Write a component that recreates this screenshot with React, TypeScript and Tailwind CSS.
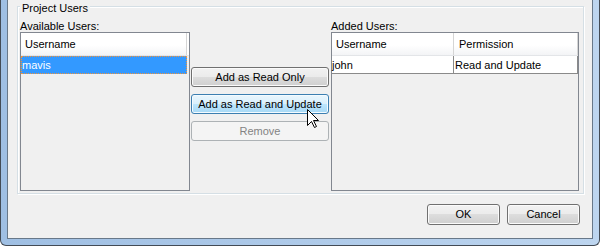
const btn =
  'h-[20px] rounded-[3px] border border-[#707070] bg-[linear-gradient(#f2f2f2,#ebebeb_50%,#dddddd_50%,#cfcfcf)] shadow-[inset_0_0_0_1px_#fbfbfb] text-center leading-[18px]'
const btnHot =
  'h-[20px] rounded-[3px] border border-[#3c7fb1] bg-[linear-gradient(#eaf6fd,#d9f0fc_50%,#bee6fd_50%,#a7d9f5)] shadow-[inset_0_0_0_1px_#f4fbff] text-center leading-[18px]'
const btnOff =
  'h-[20px] rounded-[3px] border border-[#adb2b5] bg-[#f4f4f4] text-[#838383] text-center leading-[18px]'

const header = 'h-[23px] flex bg-[linear-gradient(#ffffff,#ffffff_55%,#f3f4f6)] border-b border-[#e3e5e8]'

function Cursor() {
  return (
    <svg className="absolute left-[307px] top-[109px]" width="13" height="20" viewBox="0 0 13 20">
      <path d="M0.5 0.5 L0.5 16.5 L4.5 12.5 L7.5 18.5 L9.5 17.5 L6.5 11.5 L11.5 11.5 Z" fill="#fff" stroke="#000" strokeWidth="1" />
    </svg>
  )
}

export default function App() {
  return (
    <div className="relative w-[600px] h-[246px] bg-white overflow-hidden font-['Liberation_Sans',Arial,sans-serif] text-[11px] text-black">
      {/* window frame */}
      <div className="h-full flex flex-col border-x border-b border-[#434b55] rounded-b-[6px] bg-[linear-gradient(90deg,#9fbfe3,#bdd5ef)] px-[6px] pb-[6px]">
        <div className="flex-1 flex flex-col border-x border-b border-[#687889] bg-[#f0f0f0]">
          {/* Project Users group */}
          <div className="relative ml-[9px] mt-[6px] w-[567px] h-[188px] border border-[#d5dfe5] shadow-[inset_1px_1px_0_#ffffff,1px_1px_0_#ffffff] pt-[11px] pl-[2px] pr-[4px] pb-[2px] flex">
            <div className="absolute left-[2px] top-[-7px] px-[2px] bg-[#f0f0f0] h-[13px] leading-[16px]">Project Users</div>

            {/* available */}
            <div className="w-[170px] flex flex-col">
              <div className="h-[14px] leading-[17px]">Available Users:</div>
              <div className="flex-1 border border-[#828790] bg-[#f0f0f0]">
                <div className={header}>
                  <div className="w-[166px] border-r border-[#d5d5d5] pl-[4px] leading-[23px]">Username</div>
                  <div className="flex-1 bg-white" />
                </div>
                <div className="h-[18px] w-[166px] bg-[#3399ff] text-white border border-dotted border-[#f0943c] leading-[17px]">mavis</div>
              </div>
            </div>

            {/* actions */}
            <div className="w-[138px] ml-[1px] pt-[49px] flex flex-col gap-[7px]">
              <div className={btn}>Add as Read Only</div>
              <div className={btnHot}>Add as Read and Update</div>
              <div className={btnOff}>Remove</div>
            </div>

            {/* added */}
            <div className="w-[248px] ml-[2px] flex flex-col">
              <div className="h-[14px] leading-[17px]">Added Users:</div>
              <div className="flex-1 border border-[#828790] bg-[#f0f0f0]">
                <div className={header}>
                  <div className="w-[122px] border-r border-[#d5d5d5] pl-[4px] leading-[23px]">Username</div>
                  <div className="w-[124px] border-r border-[#d5d5d5] pl-[5px] leading-[23px]">Permission</div>
                </div>
                <div className="h-[18px] w-[246px] flex bg-white border-b border-[#8a8a8a] leading-[18px]">
                  <div className="w-[122px] border-r border-[#8a8a8a]">john</div>
                  <div className="w-[124px] border-r border-[#8a8a8a] pl-[1px]">Read and Update</div>
                </div>
              </div>
            </div>
          </div>

          {/* dialog buttons */}
          <div className="mt-[10px] mr-[12px] flex justify-end gap-[7px]">
            <div className={`${btn} w-[73px] h-[21px] leading-[19px]`}>OK</div>
            <div className={`${btn} w-[73px] h-[21px] leading-[19px]`}>Cancel</div>
          </div>
        </div>
      </div>
      <Cursor />
    </div>
  )
}
